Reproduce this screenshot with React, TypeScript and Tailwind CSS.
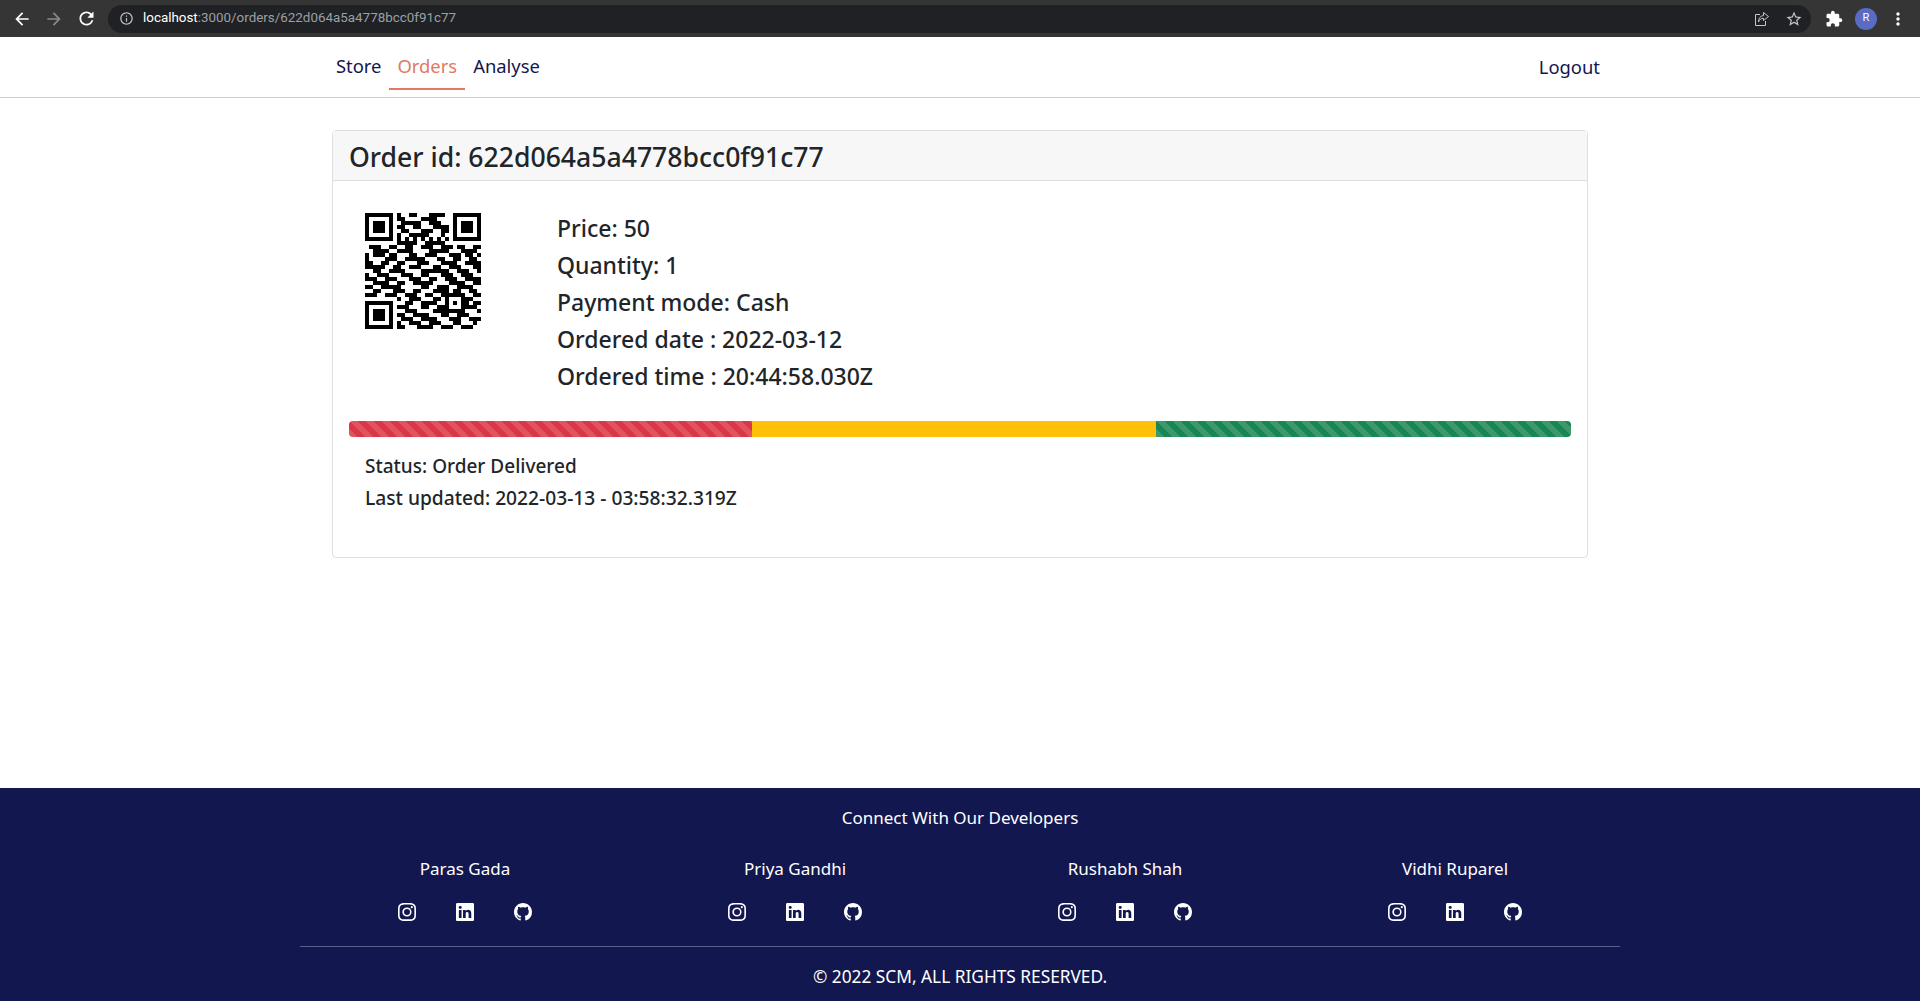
import React from 'react';
import { MdArrowBack, MdArrowForward, MdRefresh, MdInfoOutline, MdStarBorder, MdExtension, MdMoreVert } from 'react-icons/md';
import { BsInstagram, BsLinkedin, BsGithub } from 'react-icons/bs';

const font = "font-['Noto_Sans','Open_Sans',sans-serif]";

// QR modules, 29 x 29, read off the screenshot
const qrRows = [
  '11111110100110001111001111111',
  '10000010110000111100001000001',
  '10111010011111001110001011101',
  '10111010110011000111101011101',
  '10111010011000111001101011101',
  '10000010100111110001001000001',
  '11111110101010101010101111111',
  '00000000111110011111000000000',
  '01110011001100111001110110011',
  '00111100111100001111100011110',
  '10111011000110011100011101101',
  '10000111001111100011001100110',
  '11001100110001110001111001111',
  '11111001100111000110011100011',
  '00110011110000111111100111001',
  '10011100011100110001110011100',
  '11100111000111001100111001111',
  '00111100110011111000011110011',
  '11001111100000110011100111100',
  '00110001110011000111101100110',
  '11100111001110011001111110011',
  '00000000100111000110100011100',
  '11111110001100111100101011011',
  '10000010111000110011100011110',
  '10111010001110000111111110001',
  '10111010110011110001100111000',
  '10111010011100111100011100111',
  '10000010100111001110001100010',
  '11111110110001111001110011100',
];

const qrPath = qrRows
  .flatMap((row, y) => row.split('').map((c, x) => (c === '1' ? `M${x} ${y}h1v1h-1z` : '')))
  .join('');

const developers = ['Paras Gada', 'Priya Gandhi', 'Rushabh Shah', 'Vidhi Ruparel'];

const info = ['Price: 50', 'Quantity: 1', 'Payment mode: Cash', 'Ordered date : 2022-03-12', 'Ordered time : 20:44:58.030Z'];

const stripes =
  'bg-[linear-gradient(45deg,rgba(255,255,255,.15)_25%,transparent_25%,transparent_50%,rgba(255,255,255,.15)_50%,rgba(255,255,255,.15)_75%,transparent_75%,transparent)] bg-[length:16px_16px]';

const BrowserBar = () => (
  <div className="flex h-[37px] items-center bg-[#353535] pl-3 pr-3 font-['Roboto',sans-serif]">
    <MdArrowBack className="text-white" size={20} />
    <MdArrowForward className="ml-3 text-[#8a8a8a]" size={20} />
    <MdRefresh className="ml-3 text-white" size={21} />
    <div className="ml-[11px] flex h-[28px] flex-1 items-center rounded-full bg-[#202124] pl-[11px] pr-2">
      <MdInfoOutline className="text-[#c0c0c0]" size={15} />
      <span className="ml-[9px] text-[13.4px] text-white">localhost</span>
      <span className="text-[13.4px] text-[#9aa0a6]">:3000/orders/622d064a5a4778bcc0f91c77</span>
      <div className="ml-auto flex items-center gap-[15px] text-[#c4c7c5]">
        <svg width="16" height="16" viewBox="0 0 16 16" fill="none" stroke="currentColor" strokeWidth="1">
          <path d="M6 3.5H1.5v11h10V10" />
          <path d="M9.500 1.500l5 4-5 4V7.300C7 7.300 5.500 8.500 4.500 11c0-3.500 1.500-6 5-6.500z" />
        </svg>
        <MdStarBorder size={18} />
      </div>
    </div>
    <MdExtension className="ml-[14px] text-white" size={18} />
    <div className="ml-3 flex h-[22px] w-[22px] items-center justify-center rounded-full bg-[#5a6bc4] text-[11px] text-white">R</div>
    <MdMoreVert className="ml-[11px] text-white" size={20} />
  </div>
);

const Navbar = () => (
  <nav className={`flex h-[61px] items-start justify-between border-b border-[#cfcfcf] bg-white pl-[328px] pr-[320px] ${font}`}>
    <div className="flex text-[18.4px] text-[#13174f]">
      <a className="flex h-[53px] items-center px-2 pt-[4px]">Store</a>
      <a className="flex h-[53px] items-center border-b-2 border-[#e07a5f] px-2 pt-[6px] text-[#e07a5f]">Orders</a>
      <a className="flex h-[53px] items-center px-2 pt-[4px]">Analyse</a>
    </div>
    <a className="mt-[16px] text-[18.4px] text-[#13174f]">Logout</a>
  </nav>
);

const OrderCard = () => (
  <div className="mx-[332px] mt-[32px] rounded border border-[#dfdfdf] bg-white text-[#212529]">
    <div className="flex h-[50px] items-center border-b border-[#dfdfdf] bg-[#f7f7f7] px-4 pt-1 text-[26.6px] font-medium">
      Order id: 622d064a5a4778bcc0f91c77
    </div>
    <div className="px-4 pb-[47px] pt-4">
      <div className="flex">
        <div className="w-[208px] pl-4 pt-4">
          <svg width="116" height="116" viewBox="0 0 29 29" shapeRendering="crispEdges">
            <path d={qrPath} fill="#000" />
          </svg>
        </div>
        <div className="pt-[17px]">
          {info.map((line) => (
            <div key={line} className="mb-2 text-[23px] font-medium leading-[29px]">
              {line}
            </div>
          ))}
        </div>
      </div>
      <div className="mt-[22px] flex h-4 overflow-hidden rounded">
        <div className={`w-[33%] bg-[#dc3545] ${stripes}`} />
        <div className="w-[33%] bg-[#ffc107]" />
        <div className={`w-[34%] bg-[#198754] ${stripes}`} />
      </div>
      <div className="pl-4 pt-[17px]">
        <div className="mb-2 text-[19px] font-medium leading-6">Status: Order Delivered</div>
        <div className="text-[19.200px] font-medium leading-6">Last updated: 2022-03-13 - 03:58:32.319Z</div>
      </div>
    </div>
  </div>
);

const Footer = () => (
  <footer className="mt-auto flex h-[213px] flex-col items-center bg-[#13174f] pt-[18px] text-white">
    <div className="text-[17px] leading-6">Connect With Our Developers</div>
    <div className="mt-[27px] grid w-[1320px] grid-cols-4 border-b border-[#5a5d86] pb-[25px]">
      {developers.map((name) => (
        <div key={name} className="flex flex-col items-center">
          <div className="text-[17px] leading-6">{name}</div>
          <div className="mt-[22px] flex gap-10">
            <BsInstagram size={18} />
            <BsLinkedin size={18} />
            <BsGithub size={18} />
          </div>
        </div>
      ))}
    </div>
    <div className="mt-[18px] text-[17.300px] leading-6">© 2022 SCM, ALL RIGHTS RESERVED.</div>
  </footer>
);

export default function App() {
  return (
    <div className={`flex h-[1001px] flex-col overflow-hidden bg-white ${font}`}>
      <BrowserBar />
      <Navbar />
      <OrderCard />
      <Footer />
    </div>
  );
}
